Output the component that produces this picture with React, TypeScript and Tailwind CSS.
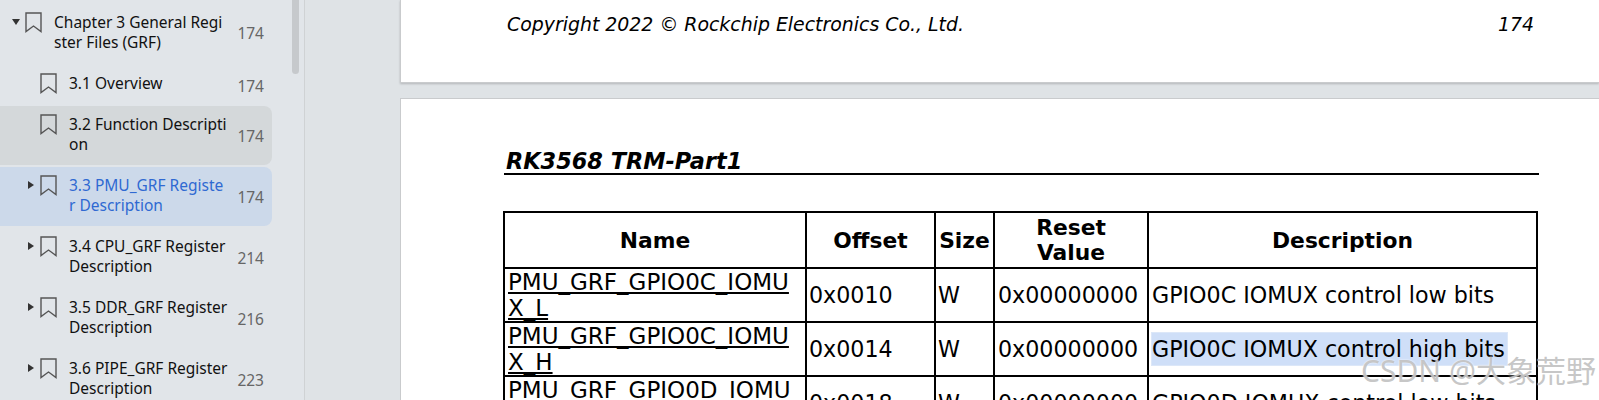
const OUTLINE = [
  { lines: ["Chapter 3 General Regi", "ster Files (GRF)"], page: "174", level: 0, arrow: "down" },
  { lines: ["3.1 Overview"], page: "174", level: 1, single: true },
  { lines: ["3.2 Function Descripti", "on"], page: "174", level: 1, tone: "hover" },
  { lines: ["3.3 PMU_GRF Registe", "r Description"], page: "174", level: 1, arrow: "right", tone: "active" },
  { lines: ["3.4 CPU_GRF Register", "Description"], page: "214", level: 1, arrow: "right" },
  { lines: ["3.5 DDR_GRF Register", "Description"], page: "216", level: 1, arrow: "right" },
  { lines: ["3.6 PIPE_GRF Register", "Description"], page: "223", level: 1, arrow: "right" },
];

const REGISTERS = [
  { name: ["PMU_GRF_GPIO0C_IOMU", "X_L"], offset: "0x0010", desc: "GPIO0C IOMUX control low bits" },
  { name: ["PMU_GRF_GPIO0C_IOMU", "X_H"], offset: "0x0014", desc: "GPIO0C IOMUX control high bits", selected: true },
  { name: ["PMU_GRF_GPIO0D_IOMU", "X_L"], offset: "0x0018", desc: "GPIO0D IOMUX control low bits" },
];

function BookmarkIcon() {
  return (
    <svg width="17" height="21" viewBox="0 0 17 21" fill="none" className="shrink-0">
      <path d="M1 1H16V19.5L8.5 14L1 19.5Z" stroke="#555" strokeWidth="1.4" />
    </svg>
  );
}

function Arrow({ dir }: { dir?: string }) {
  if (!dir) return <span className="w-[8px] shrink-0" />;
  return (
    <svg width="8" height="8" viewBox="0 0 8 8" className="shrink-0 mt-[6px]">
      <path d={dir === "down" ? "M0 1H8L4 7Z" : "M1 0V8L7 4Z"} fill="#333" />
    </svg>
  );
}

function OutlineRow({ item }: { item: (typeof OUTLINE)[number] }) {
  const bg =
    item.tone === "hover" ? "bg-[#d4d8da]" : item.tone === "active" ? "bg-[#ccd9ea]" : "";
  const color = item.tone === "active" ? "text-[#2f69d2]" : "text-[#111]";
  return (
    <div className={`flex w-[272px] rounded-r-lg pt-[8px] pr-[8px] ${item.single ? "pb-[8px]" : "pb-[11px]"} ${bg}`}>
      <div className={`flex shrink-0 items-start gap-[5px] ${item.level ? "pl-[27px]" : "pl-[12px]"}`}>
        <Arrow dir={item.arrow} />
        <BookmarkIcon />
      </div>
      <div className={`ml-[12px] flex-1 whitespace-nowrap text-[15.5px] leading-[20px] ${color}`}>
        {item.lines.map((l) => (
          <div key={l}>{l}</div>
        ))}
      </div>
      <div className="flex translate-y-[2px] items-center text-[15.5px] text-[#666]">{item.page}</div>
    </div>
  );
}

export default function App() {
  return (
    <div className="relative flex h-[400px] w-[1599px] overflow-hidden bg-[#dfe3e6] font-['DejaVu_Sans',sans-serif] text-black">
      <aside className="relative w-[305px] shrink-0 border-r border-[#cfd2d4] bg-[#e1e5e9] font-['Noto_Sans',sans-serif]">
        <div className="flex flex-col gap-[2px] pt-[4px]">
          {OUTLINE.map((item) => (
            <OutlineRow key={item.lines[0]} item={item} />
          ))}
        </div>
        <div className="absolute left-[292px] top-0 h-[74px] w-[7px] rounded-b bg-[#c6c9cc]" />
      </aside>

      <main className="flex-1 pl-[95px]">
        <section className="flex h-[83px] items-start justify-between border-b border-l border-[#c9cbcd] bg-white pl-[106px] pr-[65px] pt-[10px] text-[18.9px] italic shadow-[0_1px_2px_rgba(0,0,0,0.2)]">
          <span>Copyright 2022 © Rockchip Electronics Co., Ltd.</span>
          <span>174</span>
        </section>

        <section className="mt-[15px] h-[400px] border-l border-t border-[#c9cbcd] bg-white pl-[103px] pr-[60px] pt-[50px]">
          <div className="h-[26px] border-b-2 border-black pl-[2px] text-[22.4px] font-bold italic leading-[25px] whitespace-nowrap">
            RK3568 TRM-Part1
          </div>
          <table className="mt-[36px] -ml-[1px] w-full table-fixed border-collapse text-[22.2px] leading-[25px]">
            <colgroup>
              <col className="w-[302px]" />
              <col className="w-[129px]" />
              <col className="w-[59px]" />
              <col className="w-[154px]" />
              <col />
            </colgroup>
            <thead>
              <tr className="h-[56px] text-[21.8px] font-bold">
                <th className="border-2 border-black">Name</th>
                <th className="border-2 border-black">Offset</th>
                <th className="border-2 border-black">Size</th>
                <th className="border-2 border-black">
                  Reset
                  <br />
                  Value
                </th>
                <th className="border-2 border-black">Description</th>
              </tr>
            </thead>
            <tbody>
              {REGISTERS.map((r) => (
                <tr key={r.offset} className="h-[54px]">
                  <td className="border-2 border-black px-[3px] whitespace-nowrap text-[23px] leading-[26px] underline">
                    {r.name[0]}
                    <br />
                    {r.name[1]}
                  </td>
                  <td className="border-2 border-black px-[2px]">{r.offset}</td>
                  <td className="border-2 border-black px-[2px]">W</td>
                  <td className="border-2 border-black px-[3px]">0x00000000</td>
                  <td className="border-2 border-black px-[3px]">
                    <span className={r.selected ? "bg-[#cfdff8] py-[3px] pr-[2px] outline outline-[#dce7f8]" : ""}>{r.desc}</span>
                  </td>
                </tr>
              ))}
            </tbody>
          </table>
        </section>
      </main>

      <div className="pointer-events-none absolute left-[1361px] top-[351px] whitespace-nowrap font-['Noto_Sans','Noto_Sans_CJK_SC',sans-serif] text-[30px] leading-[40px] text-[#bdbdbd]/85 [text-shadow:0_0_2px_white]">
        CSDN @大象荒野
      </div>
    </div>
  );
}
